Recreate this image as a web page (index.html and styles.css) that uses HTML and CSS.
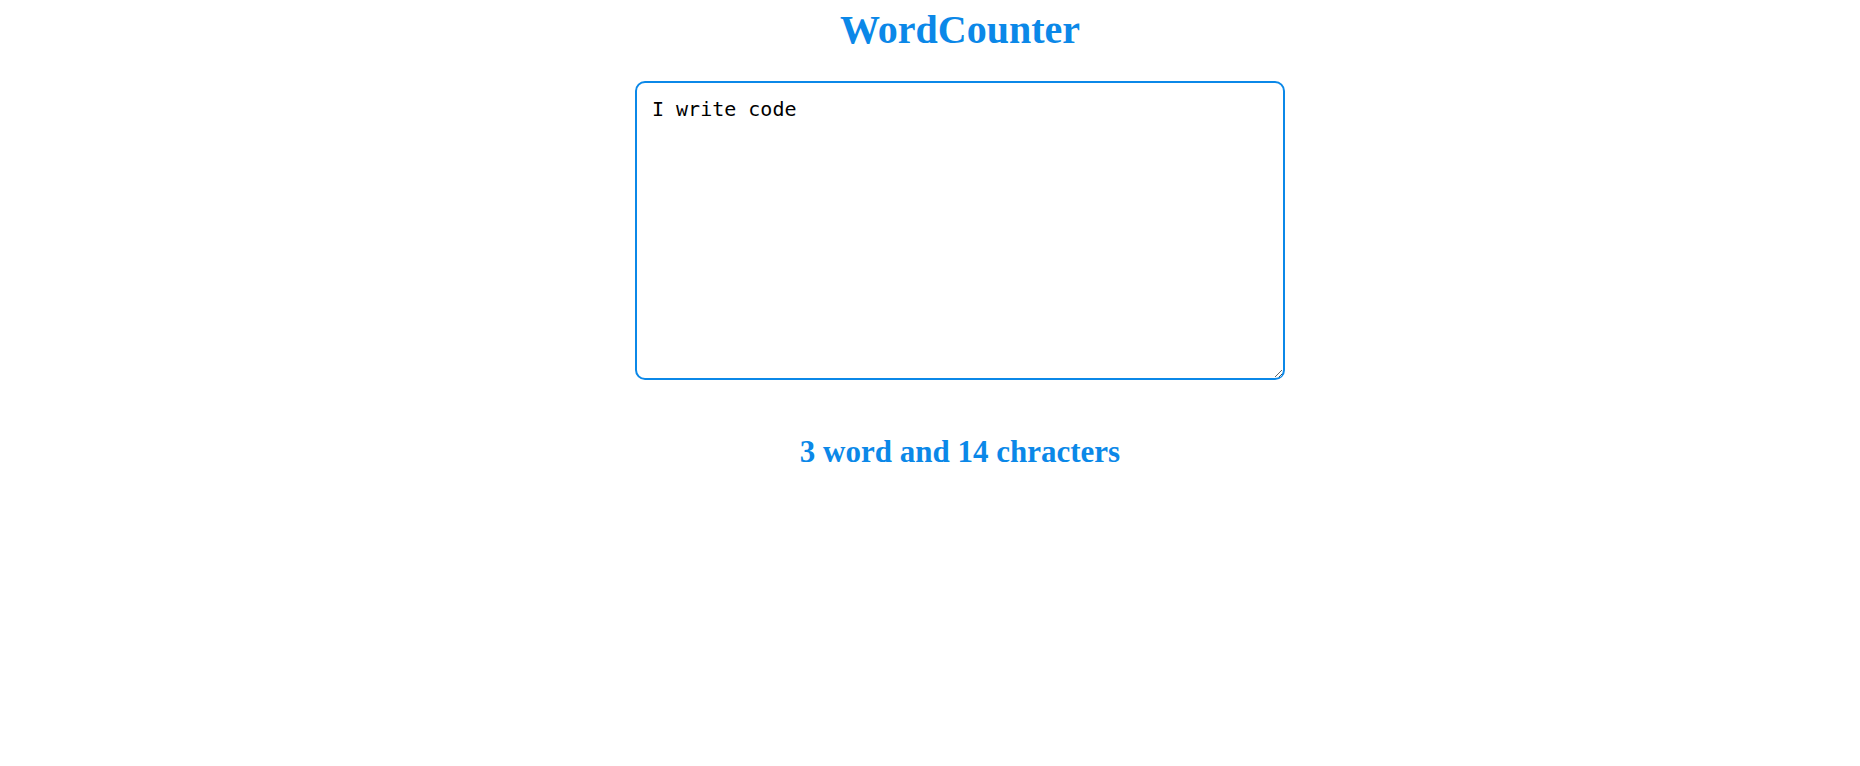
FILE: index.html
```html
<!DOCTYPE html>
<html lang="en">
<head>
<meta charset="utf-8">
<title>WordCounter</title>
<link rel="stylesheet" href="styles.css">
</head>
<body>
<main class="app">
  <h1 class="app-title">WordCounter</h1>
  <textarea class="editor" autofocus spellcheck="false">I write code</textarea>
  <h2 class="summary">3 word and 14 chracters</h2>
</main>
</body>
</html>
```

FILE: styles.css
```css
html, body {
  margin: 0;
  padding: 0;
  background: #ffffff;
}

.app {
  display: flex;
  flex-direction: column;
  align-items: center;
  padding-top: 7px;
  padding-left: 60px;
  font-family: "Liberation Serif", "Times New Roman", serif;
}

.app-title {
  margin: 0;
  font-size: 40px;
  font-weight: bold;
  color: #0b88e8;
  line-height: 46px;
}

.editor {
  margin-top: 28px;
  box-sizing: border-box;
  width: 650px;
  height: 299px;
  border: 2px solid #0b88e8;
  border-radius: 10px;
  padding: 14px 14px 15px 15px;
  font-family: "DejaVu Sans Mono", monospace;
  font-size: 20px;
  color: #000000;
  caret-color: #000000;
  outline: none;
  background: #ffffff;
}

.summary {
  margin: 54px 0 0 0;
  font-size: 31px;
  font-weight: bold;
  color: #0b88e8;
  line-height: 36px;
}
```
